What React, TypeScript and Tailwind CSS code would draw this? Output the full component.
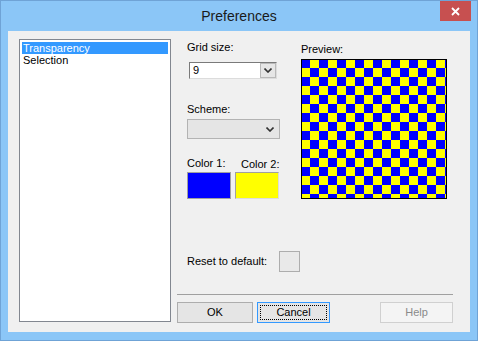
import React from "react";

const font = "font-['Liberation_Sans',Arial,sans-serif]";

function Chevron() {
  return (
    <svg width="8" height="5" viewBox="0 0 8 5" className="block">
      <polyline points="0.5,0.5 4,4 7.5,0.5" fill="none" stroke="#333" strokeWidth="1.6" />
    </svg>
  );
}

function Checker() {
  const rows = Array.from({ length: 17 });
  const cols = Array.from({ length: 17 });
  return (
    <div className="w-[146px] h-[140px] border border-black overflow-hidden">
      <div className="-ml-[1px] -mt-[1px]">
        {rows.map((_, r) => (
          <div key={r} className="flex">
            {cols.map((_, c) => (
              <div
                key={c}
                className={`w-[9px] h-[9px] shrink-0 ${(r + c) % 2 === 0 ? "bg-[#0000ff]" : "bg-[#ffff00]"}`}
              />
            ))}
          </div>
        ))}
      </div>
    </div>
  );
}

export default function App() {
  return (
    <div className={`w-[478px] h-[341px] bg-[#8bc6f7] border border-[#6fa3d6] relative flex flex-col ${font} text-[11px] leading-[13px] text-black`}>
      <div className="h-[30px] shrink-0 flex items-center justify-center">
        <span className="text-[14px] text-[#1a1a1a] mt-[1px]">Preferences</span>
      </div>
      <div className="absolute top-0 right-[6px] w-[31px] h-[20px] bg-[#c75050] flex items-center justify-center">
        <svg width="9" height="9" viewBox="0 0 9 9">
          <path d="M1 1L8 8M8 1L1 8" stroke="#fff" strokeWidth="1.8" />
        </svg>
      </div>

      <div className="mx-[7px] h-[301px] bg-[#f0f0f0] flex">
        <div className="pl-[11px] pt-[8px] w-[169px] shrink-0">
          <div className="w-[152px] h-[283px] bg-white border border-[#828790] p-[2px]">
            <div className="h-[12px] bg-[#3399ff] text-white leading-[12px] pl-[1px]">Transparency</div>
            <div className="h-[12px] leading-[12px] pl-[1px]">Selection</div>
          </div>
        </div>

        <div className="flex flex-col w-[276px]">
          <div className="flex">
            <div className="w-[124px] pl-[10px] flex flex-col">
              <div className="mt-[10px]">Grid size:</div>
              <div className="mt-[8px] ml-[2px] w-[88px] h-[17px] bg-white border border-[#7a7a7a] border-r-[#dcdcdc] border-b-[#dcdcdc] flex items-center">
                <span className="pl-[3px] flex-1">9</span>
                <div className="w-[16px] h-[15px] bg-[#e6e6e6] border border-[#b9b9b9] flex items-center justify-center">
                  <Chevron />
                </div>
              </div>
              <div className="mt-[24px]">Scheme:</div>
              <div className="mt-[3px] w-[93px] h-[20px] bg-[#e5e5e5] border border-[#b3b3b3] flex items-center justify-end pr-[5px]">
                <Chevron />
              </div>
              <div className="mt-[18px] flex">
                <span className="w-[54px]">Color 1:</span>
                <span className="mt-[1px]">Color 2:</span>
              </div>
              <div className="mt-[1px] flex gap-[4px]">
                <div className="w-[44px] h-[27px] bg-[#0000ff] border border-[#a0a0a0]" />
                <div className="w-[44px] h-[27px] bg-[#ffff00] border border-[#a0a0a0] border-r-[#dcdcdc] border-b-[#dcdcdc]" />
              </div>
            </div>
            <div className="flex flex-col">
              <div className="mt-[12px]">Preview:</div>
              <div className="mt-[3px]">
                <Checker />
              </div>
            </div>
          </div>

          <div className="mt-[52px] pl-[10px] flex items-center">
            <span className="w-[92px]">Reset to default:</span>
            <div className="w-[21px] h-[21px] bg-[#e9e9e9] border border-[#adadad]" />
          </div>

          <div className="mt-[22px] h-[1px] bg-[#a0a0a0]" />

          <div className="mt-[7px] flex">
            <div className="w-[76px] h-[21px] bg-[#e5e5e5] border border-[#adadad] flex items-center justify-center">OK</div>
            <div className="ml-[4px] w-[73px] h-[21px] bg-[#e5e5e5] border border-[#3399ff] p-[2px]">
              <div className="w-full h-full border border-dotted border-black flex items-center justify-center">Cancel</div>
            </div>
            <div className="ml-[50px] w-[73px] h-[21px] bg-[#f4f4f4] border border-[#d0d0d0] text-[#8a8a8a] flex items-center justify-center">Help</div>
          </div>
        </div>
      </div>
    </div>
  );
}
